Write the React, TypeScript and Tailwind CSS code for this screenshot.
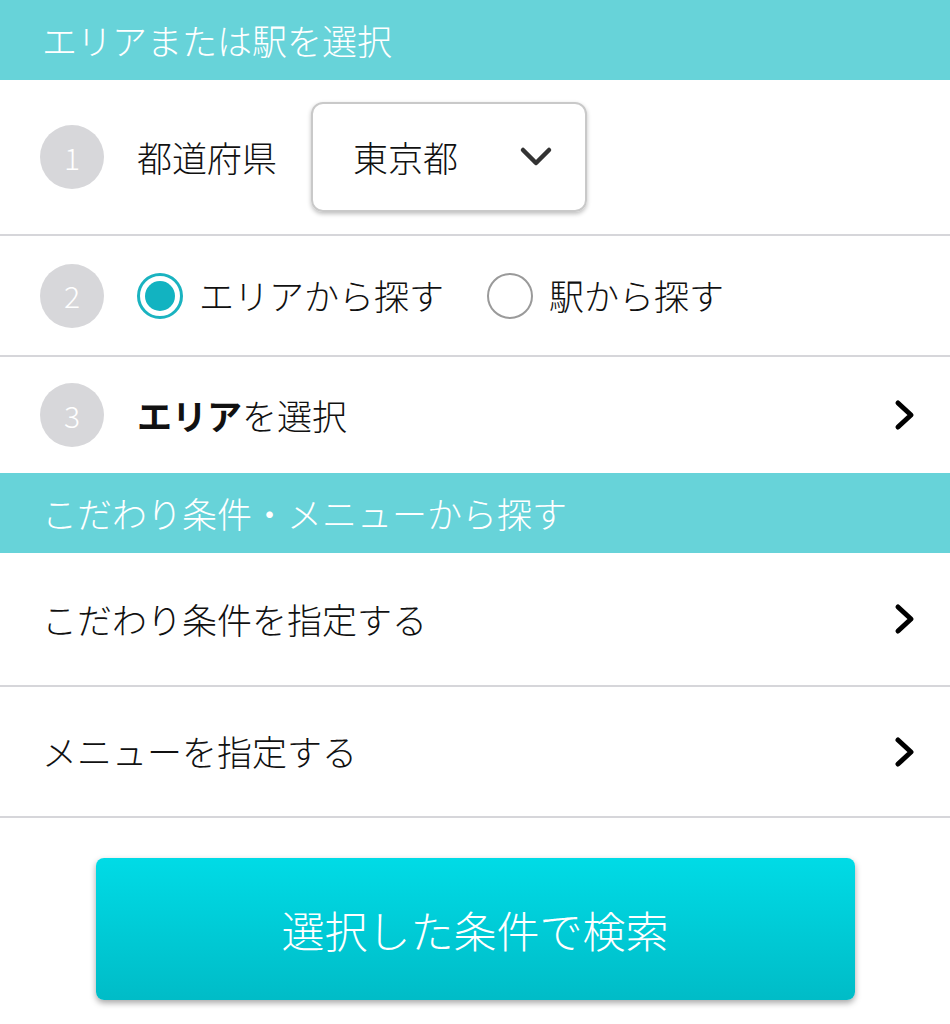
const font = { fontFamily: '"Noto Sans CJK JP", "Noto Sans", sans-serif' };

function Step({ n }: { n: number }) {
  return (
    <div className="w-16 h-16 rounded-full bg-[#d7d7da] flex items-center justify-center text-white text-[30px] font-light shrink-0">
      {n}
    </div>
  );
}

function Arrow() {
  return (
    <svg width="22" height="32" viewBox="0 0 22 32" fill="none" className="shrink-0">
      <path d="M4 4 L17 16 L4 28" stroke="#000" strokeWidth="5" strokeLinecap="round" strokeLinejoin="round" />
    </svg>
  );
}

function Caret() {
  return (
    <svg width="34" height="22" viewBox="0 0 34 22" fill="none" className="shrink-0">
      <path d="M4 4 L17 17 L30 4" stroke="#333" strokeWidth="4.5" strokeLinecap="round" strokeLinejoin="round" />
    </svg>
  );
}

function Radio({ checked, label }: { checked?: boolean; label: string }) {
  return (
    <label className="flex items-center gap-4">
      {checked ? (
        <span className="w-[46px] h-[46px] rounded-full border-[3px] border-[#1ab3c0] flex items-center justify-center">
          <span className="w-[30px] h-[30px] rounded-full bg-[#12b3c1]" />
        </span>
      ) : (
        <span className="w-[46px] h-[46px] rounded-full border-[2.5px] border-[#9a9a9a]" />
      )}
      <span>{label}</span>
    </label>
  );
}

export default function App() {
  return (
    <div className="w-[950px] h-[1024px] bg-white text-[35px] font-light text-[#111]" style={font}>
      <div className="h-20 bg-[#67d3d9] text-white flex items-center px-[42px]">エリアまたは駅を選択</div>

      <div className="h-[156px] flex items-center pl-10 border-b-2 border-[#d6d6da]">
        <Step n={1} />
        <span className="ml-[33px]">都道府県</span>
        <div className="ml-[34px] w-[276px] h-[110px] rounded-xl border-2 border-[#c9c9c9] shadow-[0_2px_4px_rgba(0,0,0,0.25)] flex items-center justify-between pl-[40px] pr-[32px]">
          <span>東京都</span>
          <Caret />
        </div>
      </div>

      <div className="h-[121px] flex items-center pl-10 border-b-2 border-[#d6d6da]">
        <Step n={2} />
        <div className="ml-[33px] flex items-center gap-[43px]">
          <Radio checked label="エリアから探す" />
          <Radio label="駅から探す" />
        </div>
      </div>

      <div className="h-[116px] flex items-center pl-10 pr-[34px]">
        <Step n={3} />
        <span className="ml-[33px] flex-1">
          <b className="font-bold">エリア</b>を選択
        </span>
        <Arrow />
      </div>

      <div className="h-20 bg-[#67d3d9] text-white flex items-center px-[42px]">こだわり条件・メニューから探す</div>

      <div className="h-[134px] flex items-center justify-between pl-[42px] pr-[34px] border-b-2 border-[#d6d6da]">
        <span>こだわり条件を指定する</span>
        <Arrow />
      </div>

      <div className="h-[131px] flex items-center justify-between pl-[42px] pr-[34px] border-b-2 border-[#d6d6da]">
        <span>メニューを指定する</span>
        <Arrow />
      </div>

      <div className="flex justify-center pt-10">
        <button className="w-[759px] h-[142px] rounded-lg bg-gradient-to-b from-[#00dbe6] to-[#00bcc7] shadow-[0_3px_6px_rgba(0,0,0,0.35)] text-white text-[43px] font-light">
          選択した条件で検索
        </button>
      </div>
    </div>
  );
}
